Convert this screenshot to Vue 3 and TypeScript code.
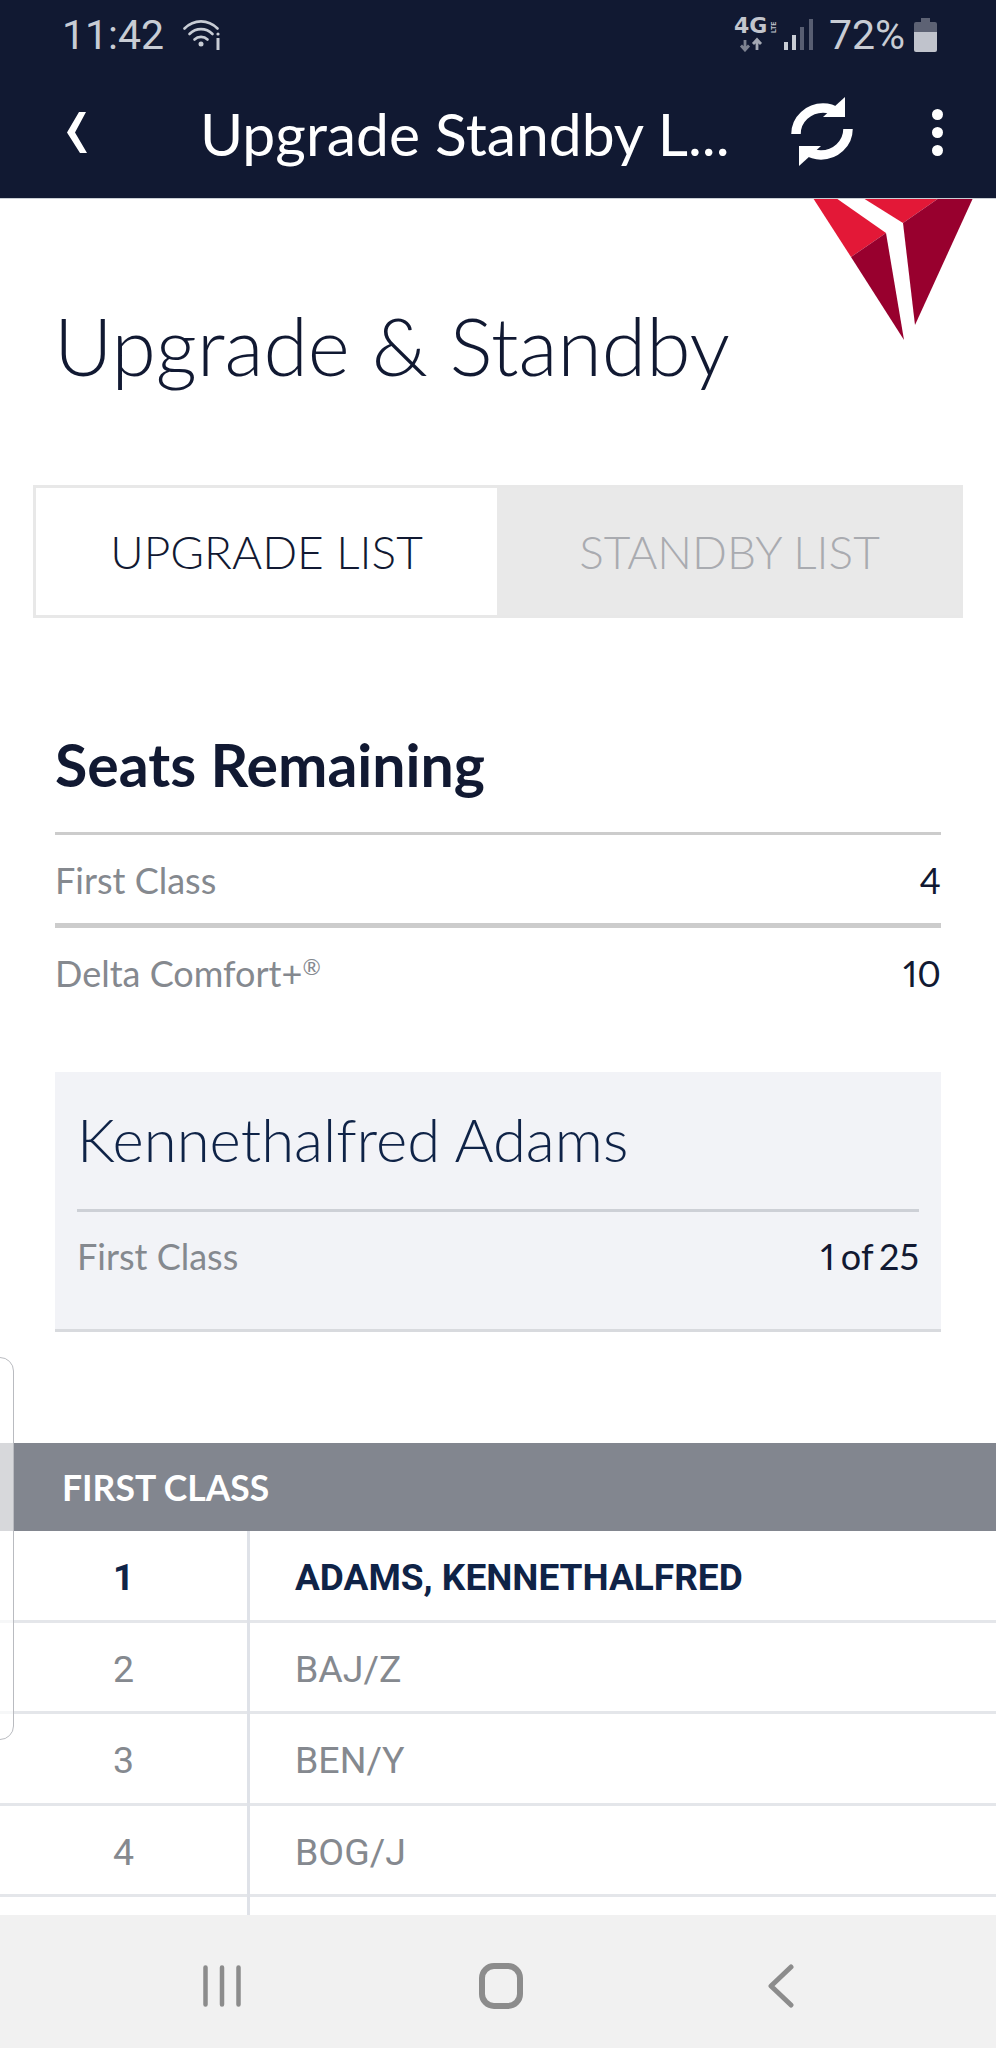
<script setup lang="ts">
interface Seat { label: string; value: string; reg?: boolean }
interface Row { num: string; name: string; me?: boolean }

const seats: Seat[] = [
  { label: 'First Class', value: '4' },
  { label: 'Delta Comfort+', value: '10', reg: true },
]
const rows: Row[] = [
  { num: '1', name: 'ADAMS, KENNETHALFRED', me: true },
  { num: '2', name: 'BAJ/Z' },
  { num: '3', name: 'BEN/Y' },
  { num: '4', name: 'BOG/J' },
  { num: '', name: '' },
]
</script>

<template>
  <div class="phone">
    <header class="top">
      <div class="status">
        <div class="status-left">
          <span class="time">11:42</span>
          <svg class="wifi" width="38" height="32" viewBox="0 0 38 32" fill="none" stroke="#c8ccd4" stroke-width="2.6" stroke-linecap="round">
            <path d="M1.5 9.5C11 0 25 0 34.500 9.500" />
            <path d="M6.500 15C13 8.500 23 8.500 29.500 15" />
            <path d="M11.500 20.500C15 17 21 17 24.500 20.500" />
            <circle cx="18" cy="25" r="2.500" fill="#c8ccd4" stroke="none" />
            <path d="M35 19V31" stroke-width="3" stroke-linecap="butt" />
            <circle cx="35" cy="15" r="1.600" fill="#c8ccd4" stroke="none" />
          </svg>
        </div>
        <div class="status-right">
          <svg class="net" width="46" height="42" viewBox="0 -6 46 42">
            <text x="2" y="17" class="net-4g">4G</text>
            <text x="0" y="0" class="net-lte" transform="translate(44 17) rotate(-90)">LTE</text>
            <path d="M16 28V20M12 25.500L16 30L20 25.500" fill="none" stroke="#7d8290" stroke-width="2.800" transform="translate(-3 4)" />
            <path d="M16 31V21M12 25L16 20.500L20 25" fill="none" stroke="#a4a8b3" stroke-width="2.800" transform="translate(9 3)" />
          </svg>
          <svg class="signal" width="30" height="32" viewBox="0 0 30 32">
            <rect x="0" y="23" width="4" height="8" fill="#c8ccd4" />
            <rect x="8" y="16" width="4" height="15" fill="#c8ccd4" />
            <rect x="16" y="8" width="4" height="23" fill="#585e72" />
            <rect x="25" y="0" width="4" height="31" fill="#585e72" />
          </svg>
          <span class="pct">72%</span>
          <svg class="battery" width="23" height="35" viewBox="0 0 23 35">
            <path d="M7 0H16V4H21A2 2 0 0 1 23 6V14H0V6A2 2 0 0 1 2 4H7Z" fill="#5d6274" />
            <path d="M0 14H23V32A2 2 0 0 1 21 34H2A2 2 0 0 1 0 32Z" fill="#c0c3cc" />
          </svg>
        </div>
      </div>
      <div class="appbar">
        <svg class="back" width="20" height="42" viewBox="0 0 20 42">
          <path d="M12 0H19L8 20.500L20 41H13L0 20.500Z" fill="#fff" />
        </svg>
        <span class="appbar-title">Upgrade Standby L...</span>
        <svg class="refresh" width="62" height="69" viewBox="0 0 62 69" fill="none">
          <g>
            <path d="M5 37C5 22 18 11 32 11C38 11 42 12.500 46 15.500" stroke="#fff" stroke-width="9.500" />
            <path d="M54 0V20H32Z" fill="#fff" />
          </g>
          <g transform="rotate(180 31 34.500)">
            <path d="M5 37C5 22 18 11 32 11C38 11 42 12.500 46 15.500" stroke="#fff" stroke-width="9.500" />
            <path d="M54 0V20H32Z" fill="#fff" />
          </g>
        </svg>
        <div class="dots"><i></i><i></i><i></i></div>
      </div>
    </header>

    <main class="content">
      <svg class="logo" width="161" height="141" viewBox="813 199 161 141">
        <path d="M813 198H836L886 233L851 257Z" fill="#e31837" />
        <path d="M851 257L886 233L904 340Z" fill="#98002e" />
        <path d="M863 198H939L903 223Z" fill="#e31837" />
        <path d="M939 198H973L915 325L903 223Z" fill="#98002e" />
      </svg>

      <h1 class="title">Upgrade &amp; Standby</h1>

      <div class="tabs">
        <div class="tab tab-on">UPGRADE LIST</div>
        <div class="tab tab-off">STANDBY LIST</div>
      </div>

      <section class="seats">
        <h2 class="seats-title">Seats Remaining</h2>
        <div v-for="s in seats" :key="s.label" class="seat-row">
          <span class="muted">{{ s.label }}<sup v-if="s.reg" class="reg">®</sup></span>
          <span class="val">{{ s.value }}</span>
        </div>
      </section>

      <section class="card">
        <div class="card-name">Kennethalfred Adams</div>
        <div class="card-row">
          <span class="muted">First Class</span>
          <span class="val tight">1 of 25</span>
        </div>
      </section>

      <div class="bar">FIRST CLASS</div>
      <div class="list">
        <div v-for="(r, i) in rows" :key="i" class="row" :class="{ me: r.me }">
          <div class="num">{{ r.num }}</div>
          <div class="name">{{ r.name }}</div>
        </div>
      </div>

      <div class="edge-panel"></div>
    </main>

    <nav class="nav">
      <svg width="38" height="42" viewBox="0 0 38 42" stroke="#8c8c8c" stroke-width="4.500" stroke-linecap="round">
        <path d="M2.500 2.500V39.500M19 2.500V39.500M35.500 2.500V39.500" />
      </svg>
      <svg width="44" height="46" viewBox="0 0 44 46" fill="none">
        <rect x="3" y="3" width="38" height="40" rx="12" stroke="#8c8c8c" stroke-width="6" />
      </svg>
      <svg class="nav-back" width="26" height="44" viewBox="0 0 26 44" fill="none" stroke="#8c8c8c" stroke-width="5" stroke-linecap="round" stroke-linejoin="round">
        <path d="M23 3L3 22L23 41" />
      </svg>
    </nav>
  </div>
</template>

<style scoped>
.phone {
  position: relative;
  width: 996px;
  height: 2048px;
  overflow: hidden;
  display: flex;
  flex-direction: column;
  background: #fff;
  font-family: Lato, "Open Sans", sans-serif;
  color: #111932;
}
.top {
  height: 199px;
  flex: none;
  background: #111932;
  display: flex;
  flex-direction: column;
  border-bottom: 1px solid #c9ced4;
  box-sizing: border-box;
}
.status {
  height: 70px;
  display: flex;
  justify-content: space-between;
  align-items: center;
  padding: 0 59px 0 62px;
}
.status-left, .status-right { display: flex; align-items: center; }
.time {
  font: 400 41px/1 Roboto, sans-serif;
  color: #c8ccd4;
}
.wifi { margin-left: 19px; margin-top: -1px; }
.net { margin-right: 6px; margin-top: -8px; }
.net-4g { font: 700 22px "DejaVu Sans", sans-serif; fill: #c2c5cd; }
.net-lte { font: 700 7px Roboto, sans-serif; fill: #c2c5cd; }
.signal { margin-right: 15px; }
.pct {
  font: 400 41px/1 Roboto, sans-serif;
  color: #c8ccd4;
  margin-right: 9px;
}
.appbar {
  flex: 1;
  display: flex;
  align-items: center;
  position: relative;
  padding-left: 67px;
}
.back { margin-top: -2px; }
.appbar-title {
  margin-left: 113px;
  font-size: 58.800px;
  font-weight: 400;
  line-height: 70px;
  color: #fff;
  white-space: nowrap;
}
.refresh { margin-left: 61px; margin-top: -5px; }
.dots {
  margin-left: 79px;
  margin-top: -4px;
  display: flex;
  flex-direction: column;
  gap: 7px;
}
.dots i {
  display: block;
  width: 11px;
  height: 11px;
  border-radius: 50%;
  background: #fff;
}

.content {
  flex: 1;
  position: relative;
  overflow: hidden;
  min-height: 0;
}
.logo { position: absolute; left: 813px; top: 0; }
.title {
  margin: 96px 0 90px 54px;
  font-size: 80.500px;
  font-weight: 300;
  line-height: 100px;
  color: #111932;
}
.tabs {
  display: flex;
  width: 930px;
  height: 133px;
  margin-left: 33px;
  box-sizing: border-box;
  border: 3px solid #e8e8e8;
}
.tab {
  flex: 1 1 0;
  min-width: 0;
  box-sizing: border-box;
  display: flex;
  align-items: center;
  justify-content: center;
  font-size: 46px;
  font-weight: 300;
}
.tab-on { background: #fff; color: #111932; }
.tab-off { background: #e9e9e9; color: #a9abb0; padding-left: 2px; }

.seats { margin: 112px 55px 0 55px; }
.seats-title {
  margin: 0 0 32px;
  font-size: 59px;
  font-weight: 700;
  line-height: 70px;
  color: #111932;
}
.seat-row {
  display: flex;
  justify-content: space-between;
  height: 88px;
  line-height: 90px;
  border-top: 3px solid #cccccc;
}
.seat-row + .seat-row { border-top-width: 5px; }
.muted { font-size: 36px; color: #85898f; }
.val { font-size: 36px; color: #111932; font-feature-settings: "pnum"; }
.tight { word-spacing: -3px; }
.reg { font-size: 22px; vertical-align: 12px; line-height: 0; }

.card {
  margin: 56px 55px 0 55px;
  padding: 27px 22px 29px;
  background: #f2f3f7;
  border-bottom: 3px solid #d8dade;
}
.card-name {
  font-size: 59.800px;
  font-weight: 300;
  line-height: 80px;
  margin-bottom: 30px;
  color: #0f2347;
}
.card-row {
  display: flex;
  justify-content: space-between;
  border-top: 3px solid #cdd0d6;
  line-height: 88px;
}

.bar {
  margin-top: 111px;
  height: 88px;
  line-height: 90px;
  padding-left: 62px;
  background: #82868f;
  color: #fff;
  font-size: 35.500px;
  font-weight: 700;
}
.row {
  display: grid;
  grid-template-columns: 250px 1fr;
  height: 91.5px;
  line-height: 93px;
  box-sizing: border-box;
  border-bottom: 3px solid #e4e6ea;
  font-family: Roboto, sans-serif;
  font-size: 37.500px;
  color: #85898f;
}
.num {
  text-align: center;
  border-right: 3px solid #dfe2e8;
}
.name { padding-left: 45px; }
.me { color: #0f2347; font-weight: 700; font-size: 37px; }
.edge-panel {
  position: absolute;
  left: -30px;
  top: 1158px;
  width: 42px;
  height: 381px;
  border: 1.500px solid #b9bbc0;
  border-radius: 14px;
  background: rgba(255, 255, 255, 0.68);
}

.nav {
  height: 133px;
  flex: none;
  background: #f1f1f1;
  position: relative;
  display: grid;
  grid-template-columns: 444px 113px 1fr;
  align-items: center;
  justify-items: center;
  padding-top: 8px;
  box-sizing: border-box;
}
.nav-back { margin-left: 8px; }
</style>
